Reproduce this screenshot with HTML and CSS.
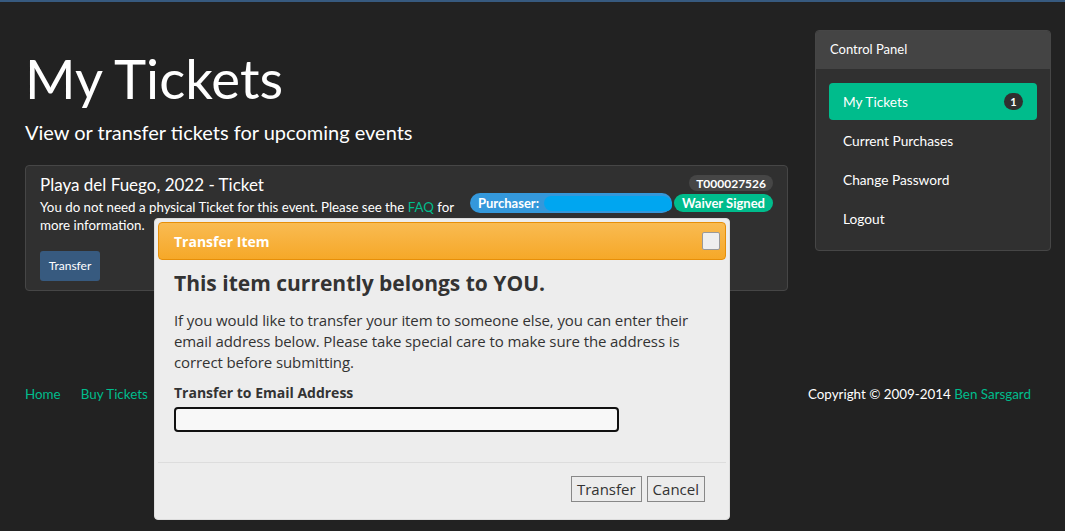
FILE: index.html
```html
<!DOCTYPE html>
<html>
<head>
<meta charset="utf-8">
<link rel="stylesheet" href="styles.css">
</head>
<body>
<div class="topbar"></div>
<div class="page">
  <main class="main">
    <h1 class="title">My Tickets</h1>
    <p class="lead">View or transfer tickets for upcoming events</p>
    <div class="ticket">
      <div class="ticket-top">
        <div class="ticket-info">
          <div class="ticket-name">Playa del Fuego, 2022 - Ticket</div>
          <p class="ticket-desc">You do not need a physical Ticket for this event. Please see the <a href="#" class="link">FAQ</a> for more information.</p>
        </div>
        <div class="ticket-badges">
          <span class="badge badge-id">T000027526</span>
          <div class="badge-row">
            <span class="badge badge-blue">Purchaser: <span class="scribble"></span></span>
            <span class="badge badge-green">Waiver Signed</span>
          </div>
        </div>
      </div>
      <button class="btn-transfer">Transfer</button>
    </div>
  </main>
  <aside class="panel">
    <div class="panel-head">Control Panel</div>
    <ul class="nav">
      <li class="nav-item active">My Tickets <span class="count">1</span></li>
      <li class="nav-item">Current Purchases</li>
      <li class="nav-item">Change Password</li>
      <li class="nav-item">Logout</li>
    </ul>
  </aside>
</div>
<footer class="footer">
  <div class="footer-links"><a href="#" class="link">Home</a><a href="#" class="link">Buy Tickets</a></div>
  <div class="copy">Copyright © 2009-2014 <a href="#" class="link">Ben Sarsgard</a></div>
</footer>

<div class="dialog">
  <div class="dialog-title">
    <span>Transfer Item</span>
    <span class="close"></span>
  </div>
  <div class="dialog-body">
    <h2 class="dialog-h">This item currently belongs to YOU.</h2>
    <p class="dialog-p">If you would like to transfer your item to someone else, you can enter their email address below. Please take special care to make sure the address is correct before submitting.</p>
    <label class="dialog-label">Transfer to Email Address</label>
    <div class="dialog-input"></div>
  </div>
  <div class="dialog-foot">
    <button class="dbtn">Transfer</button>
    <button class="dbtn">Cancel</button>
  </div>
</div>
</body>
</html>
```
FILE: styles.css
```css
html, body { margin: 0; padding: 0; }
body {
  background: #222222;
  color: #ffffff;
  font-family: Lato, "Open Sans", sans-serif;
  font-size: 14px;
  width: 1065px;
  height: 531px;
  overflow: hidden;
  position: relative;
}
.topbar { height: 2px; background: #375a7f; }
.page {
  display: flex;
  gap: 27px;
  padding: 28px 14px 0 25px;
}
.main { width: 763px; }
.title {
  font-size: 54.5px;
  font-weight: 400;
  line-height: 1;
  margin: 21px 0 0 0;
}
.lead {
  font-size: 20px;
  margin: 14px 0 0;
  line-height: 1.2;
}
.ticket {
  margin-top: 21px;
  background: #303030;
  border: 1px solid #464646;
  border-radius: 4px;
  padding: 9px 14px 9px 14px;
  height: 126px;
  box-sizing: border-box;
}
.ticket-top { display: flex; justify-content: space-between; }
.ticket-info { width: 425px; }
.ticket-name { font-size: 17px; line-height: 19px; margin-top: 0; }
.ticket-desc { font-size: 13.3px; line-height: 18px; margin: 4px 0 0; }
.link { color: #00bc8c; text-decoration: none; }
.ticket-badges { display: flex; flex-direction: column; align-items: flex-end; gap: 2px; }
.badge {
  display: inline-block;
  font-size: 12px;
  font-weight: 700;
  border-radius: 10px;
  padding: 0 8px;
  line-height: 18px;
}
.badge-id { background: #464646; height: 16px; line-height: 17px; padding: 0 7px; }
.badge-row { display: flex; gap: 2px; }
.badge-blue { background: #3498db; width: 186px; position: relative; height: 20px; line-height: 20px; font-size: 13px; }
.badge-green { background: #00bc8c; height: 18px; font-size: 13px; line-height: 18px; margin-top: 1px; }
.scribble {
  position: absolute;
  left: 74px; top: 3px;
  width: 128px; height: 15px;
  background: #00a6f0;
  border-radius: 8px 10px 6px 9px;
}
.btn-transfer {
  display: block;
  margin-top: 17px;
  background: #375a7f;
  color: #fff;
  border: none;
  border-radius: 3px;
  font-family: Lato, sans-serif;
  font-size: 12px;
  width: 60px;
  height: 30px;
  padding: 0;
}
.panel {
  width: 236px;
  height: 221px;
  box-sizing: border-box;
  background: #303030;
  border: 1px solid #464646;
  border-radius: 4px;
  overflow: hidden;
}
.panel-head {
  background: #444444;
  height: 38px;
  line-height: 37px;
  padding-left: 14px;
  font-size: 13px;
}
.nav { list-style: none; margin: 0; padding: 14px 13px 0 13px; }
.nav-item {
  height: 37px;
  line-height: 35px;
  padding: 0 14px;
  margin-bottom: 2px;
  border-radius: 4px;
  font-size: 13.7px;
  display: flex;
  justify-content: space-between;
  align-items: center;
}
.nav-item.active { background: #00bc8c; }
.count {
  background: #303030;
  border-radius: 9px;
  font-size: 11px;
  font-weight: 700;
  height: 17px;
  min-width: 19px;
  line-height: 17px;
  text-align: center;
}
.footer {
  position: absolute;
  left: 25px; right: 34px; top: 385px;
  display: flex;
  justify-content: space-between;
  font-size: 13.4px;
  line-height: 18px;
}
.footer-links { display: flex; gap: 20px; }
.dialog {
  position: absolute;
  left: 154px; top: 218px;
  width: 576px; height: 302px;
  box-sizing: border-box;
  background: #ededed;
  border: 1px solid #dddddd;
  border-radius: 4px;
  padding: 3px;
  color: #333333;
  font-family: "Open Sans", sans-serif;
}
.dialog-title {
  height: 38px;
  box-sizing: border-box;
  border: 1px solid #e78f08;
  border-radius: 4px;
  background: linear-gradient(#f9bb52, #f6a828);
  color: #fff;
  font-weight: 700;
  font-size: 14px;
  display: flex;
  justify-content: space-between;
  align-items: center;
  padding: 0 5px 0 15px;
}
.close {
  width: 16px; height: 16px;
  background: #eeeeee;
  border: 1px solid #999;
  border-radius: 2px;
}
.dialog-body { padding: 8px 16px 0 16px; height: 203px; box-sizing: border-box; border-bottom: 1px solid #dddddd; }
.dialog-h { font-size: 21px; font-weight: 700; margin: 0; line-height: 30px; color: #333; }
.dialog-p { font-size: 15px; line-height: 21px; margin: 12px 0 0; letter-spacing: -0.1px; }
.dialog-label { display: block; font-weight: 700; font-size: 14px; margin-top: 10px; line-height: 20px; }
.dialog-input {
  margin-top: 4px;
  width: 445px; height: 25px;
  box-sizing: border-box;
  border: 2px solid #111;
  border-radius: 4px;
  background: #f8f8f8;
}
.dialog-foot { display: flex; justify-content: flex-end; gap: 5px; padding: 13px 21px 0 0; }
.dbtn {
  font-family: "Open Sans", sans-serif;
  font-size: 15px;
  color: #333;
  background: #ececec;
  border: 1px solid #888;
  height: 26px;
  line-height: 22px;
  padding: 0 5px;
}
```
